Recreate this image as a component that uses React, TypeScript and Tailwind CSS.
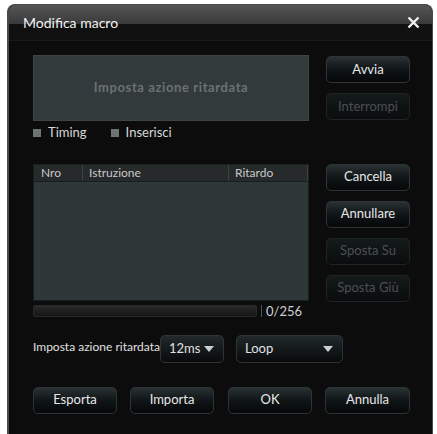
import React from 'react';

const font = { fontFamily: 'Lato, "Noto Sans", sans-serif' };

function Btn({ label, disabled = false, w = 'w-[84px]' }: { label: string; disabled?: boolean; w?: string }) {
  return (
    <div
      className={`${w} h-[27px] rounded-[5px] border flex items-center justify-center text-[13px] ${
        disabled
          ? 'border-[#1e2324] bg-gradient-to-b from-[#151a1b] to-[#0a0c0d] text-[#4a5052]'
          : 'border-[#2e3436] bg-gradient-to-b from-[#2a3234] via-[#101517] to-[#060809] text-[#e8e8e8]'
      }`}
    >
      {label}
    </div>
  );
}

function Check({ label }: { label: string }) {
  return (
    <div className="flex items-center gap-[7px]">
      <div className="w-[8px] h-[8px] bg-[#6e7474]" />
      <span className="text-[13px] text-[#d8d8d8]">{label}</span>
    </div>
  );
}

function Dropdown({ label, w }: { label: string; w: string }) {
  return (
    <div
      className={`${w} h-[28px] rounded-[5px] border border-[#2e3436] bg-gradient-to-b from-[#222a2c] to-[#080a0b] flex items-center justify-between pl-[8px] pr-[9px]`}
    >
      <span className="text-[13px] text-[#e0e0e0]">{label}</span>
      <svg width="10" height="6" viewBox="0 0 10 6">
        <path d="M0 0 L10 0 L5 6 Z" fill="#c8d0d2" />
      </svg>
    </div>
  );
}

export default function App() {
  return (
    <div className="w-[437px] h-[434px] bg-white overflow-hidden flex" style={font}>
      <div className="ml-[7px] mt-[4px] w-[426px] h-[430px] rounded-t-[8px] border-l-2 border-r border-t border-[#4a4a4a] bg-[#0c0c0c] flex flex-col overflow-hidden">
        {/* Title bar */}
        <div className="h-[36px] relative bg-gradient-to-b from-[#555555] via-[#3c3c3c] to-[#141414] flex items-center justify-between pl-[14px] pr-[12px] border-b border-[#1a1a1a]">
          <div className="absolute left-0 right-0 bottom-0 h-[16px] bg-[#101010]" />
          <span className="relative text-[14px] text-[#f2f2f2] -mt-[1px]">Modifica macro</span>
          <svg className="relative" width="13" height="13" viewBox="0 0 13 13">
            <path d="M1.5 1.5 L11.5 11.5 M11.5 1.5 L1.5 11.5" stroke="#f0f0f0" strokeWidth="2.4" />
          </svg>
        </div>

        <div className="pl-[24px] pr-[22px] pt-[14px] flex flex-col">
          {/* Row 1 */}
          <div className="flex gap-[17px]">
            <div className="w-[276px] flex flex-col">
              <div className="h-[66px] bg-[#323a3b] border border-[#3c4445] flex items-center justify-center">
                <span className="text-[13px] font-bold tracking-[0.6px] text-[#6a7272]">Imposta azione ritardata</span>
              </div>
              <div className="flex gap-[24px] mt-[2px]">
                <Check label="Timing" />
                <Check label="Inserisci" />
              </div>
            </div>
            <div className="flex flex-col gap-[10px] pt-[1px]">
              <Btn label="Avvia" />
              <Btn label="Interrompi" disabled />
            </div>
          </div>

          {/* Row 2 */}
          <div className="flex gap-[17px] mt-[21px]">
            <div className="w-[276px] flex flex-col">
              <div className="h-[137px] bg-[#2f3839] border border-[#1c1f20] flex flex-col">
                <div className="h-[17px] bg-[#262a2b] flex text-[12px] text-[#c8c8c8] border-b border-[#1a1d1e]">
                  <div className="w-[49px] pl-[7px] border-r border-[#3e4243] leading-[16px]">Nro</div>
                  <div className="w-[146px] pl-[6px] border-r border-[#3e4243] leading-[16px]">Istruzione</div>
                  <div className="flex-1 pl-[6px] border-r border-[#3e4243] leading-[16px]">Ritardo</div>
                </div>
              </div>
              <div className="flex items-center mt-[4px] gap-[4px]">
                <div className="w-[224px] h-[12px] rounded-[2px] bg-gradient-to-b from-[#2a2a2a] to-[#161616] border border-[#2a2a2a]" />
                <div className="w-[1px] h-[12px] bg-[#555]" />
                <span className="text-[13px] text-[#d0d0d0] leading-[12px]">0/256</span>
              </div>
            </div>
            <div className="flex flex-col gap-[10px]">
              <Btn label="Cancella" />
              <Btn label="Annullare" />
              <Btn label="Sposta Su" disabled />
              <Btn label="Sposta Giù" disabled />
            </div>
          </div>

          {/* Row 3 */}
          <div className="flex items-center mt-[18px]">
            <span className="text-[12px] text-[#e0e0e0] whitespace-nowrap w-[127px] -mt-[4px]">Imposta azione ritardata</span>
            <Dropdown label="12ms" w="w-[64px]" />
            <div className="w-[12px]" />
            <Dropdown label="Loop" w="w-[107px]" />
          </div>

          {/* Row 4 */}
          <div className="flex mt-[24px]">
            <Btn label="Esporta" />
            <div className="w-[13px]" />
            <Btn label="Importa" />
            <div className="w-[14px]" />
            <Btn label="OK" />
            <div className="w-[13px]" />
            <Btn label="Annulla" w="w-[85px]" />
          </div>
        </div>
      </div>
    </div>
  );
}
